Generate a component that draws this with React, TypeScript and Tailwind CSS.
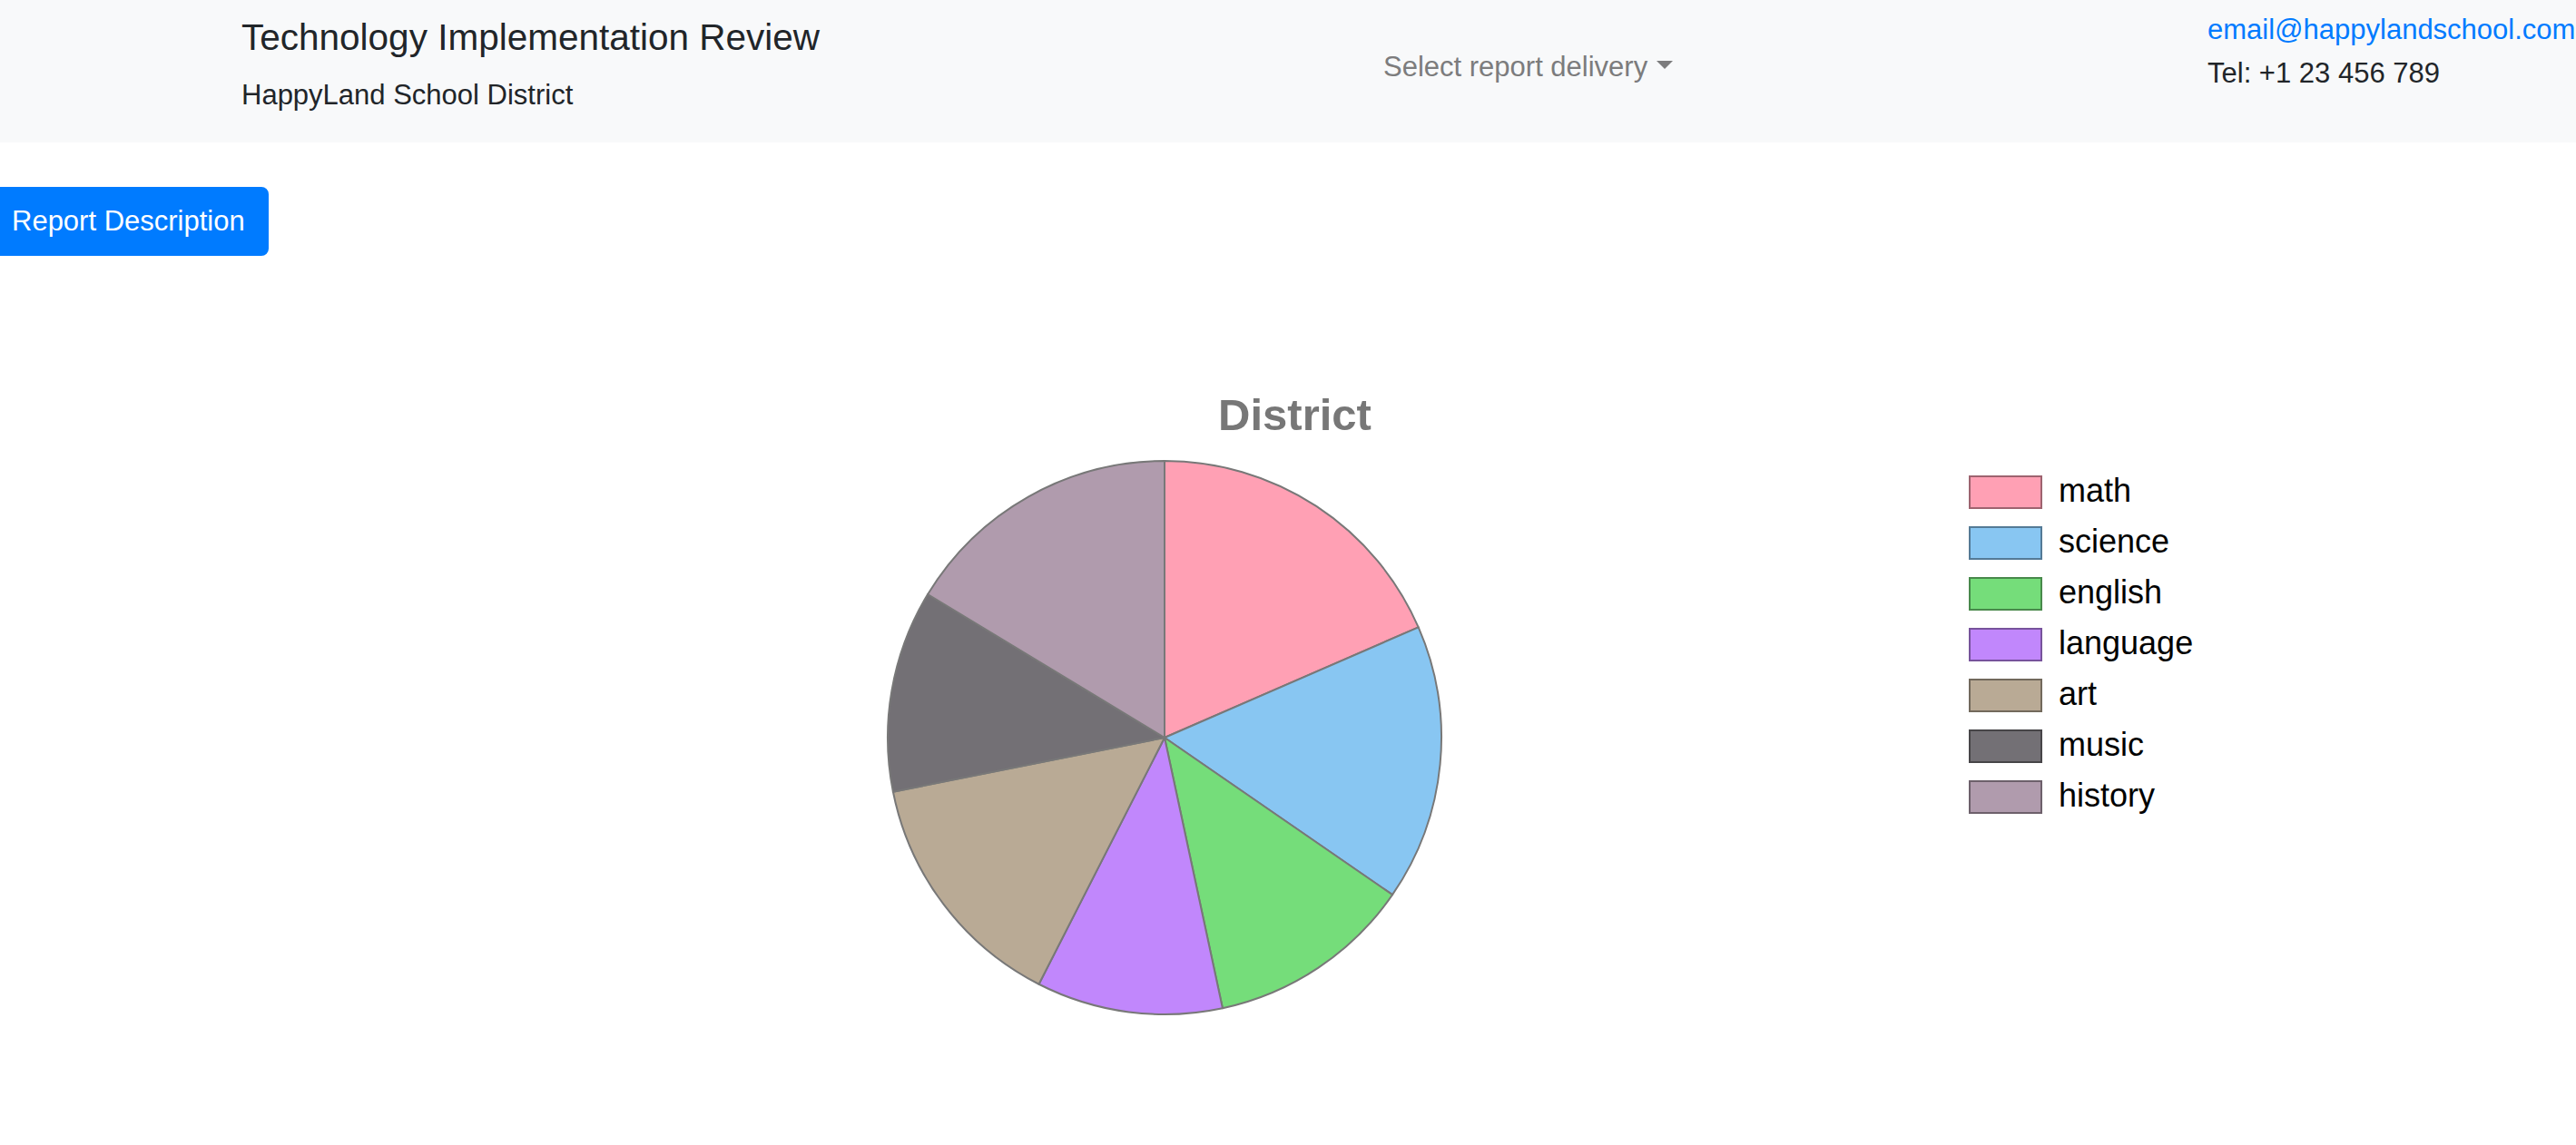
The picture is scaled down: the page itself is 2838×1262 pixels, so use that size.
const subjects = [
  { name: "math", color: "#ffa0b4", end: 66.5 },
  { name: "science", color: "#88c6f2", end: 124.6 },
  { name: "english", color: "#75dd7a", end: 167.9 },
  { name: "language", color: "#c187fc", end: 207 },
  { name: "art", color: "#b9aa95", end: 258.7 },
  { name: "music", color: "#737075", end: 301.2 },
  { name: "history", color: "#b09bad", end: 360 },
];

const CX = 310;
const CY = 310;
const R = 305;

function point(deg: number) {
  const rad = (deg * Math.PI) / 180;
  return [CX + R * Math.sin(rad), CY - R * Math.cos(rad)];
}

function slicePath(start: number, end: number) {
  const [x1, y1] = point(start);
  const [x2, y2] = point(end);
  const large = end - start > 180 ? 1 : 0;
  return `M${CX},${CY} L${x1},${y1} A${R},${R} 0 ${large} 1 ${x2},${y2} Z`;
}

function PieChart() {
  let start = 0;
  return (
    <svg width="620" height="620" viewBox="0 0 620 620" className="shrink-0">
      {subjects.map((s) => {
        const d = slicePath(start, s.end);
        start = s.end;
        return (
          <path key={s.name} d={d} fill={s.color} stroke="#787878" strokeWidth="2" strokeLinejoin="round" />
        );
      })}
    </svg>
  );
}

function Legend() {
  return (
    <ul className="mt-[21px] flex flex-col">
      {subjects.map((s) => (
        <li key={s.name} className="flex h-[56px] items-start">
          <span
            className="h-[37px] w-[81px] border-2 border-[rgba(0,0,0,0.38)]"
            style={{ backgroundColor: s.color }}
          />
          <span className="ml-[18px] text-[36px] leading-[33px] text-black">{s.name}</span>
        </li>
      ))}
    </ul>
  );
}

export default function App() {
  return (
    <div className="min-h-screen overflow-hidden bg-white font-['Liberation_Sans',Arial,sans-serif] text-[#212529]">
      <header className="flex h-[157px] bg-[#f8f9fa]">
        <div className="w-[1524px] shrink-0 pl-[266px]">
          <div className="pt-[17px] text-[40.5px] leading-[48px]">Technology Implementation Review</div>
          <div className="mt-[16px] text-[31px] leading-[48px]">HappyLand School District</div>
        </div>
        <div className="w-[908px] shrink-0 pt-[50px]">
          <button className="flex items-start text-[31px] leading-[48px] text-[#7c7c7d]">
            Select report delivery
            <span className="ml-[10px] mt-[17px] h-0 w-0 border-x-[9px] border-t-[9px] border-x-transparent border-t-[#7c7c7d]" />
          </button>
        </div>
        <div className="shrink-0 whitespace-nowrap pt-[9px] text-[31px] leading-[48px]">
          <a href="#" className="block text-[#007bff]">email@happylandschool.com</a>
          <div>Tel: +1 23 456 789</div>
        </div>
      </header>

      <main>
        <button className="-ml-[13px] mt-[49px] rounded-[8px] border-2 border-[#007bff] bg-[#007bff] px-[24px] py-[12px] text-[31px] leading-[48px] text-white">
          Report Description
        </button>

        <section className="mt-[147px]">
          <h2 className="pl-[15px] text-center text-[49px] font-bold leading-[56px] text-[#777]">District</h2>
          <div className="mt-[18px] flex items-start pl-[973px]">
            <PieChart />
            <div className="ml-[576px]">
              <Legend />
            </div>
          </div>
        </section>
      </main>
    </div>
  );
}
